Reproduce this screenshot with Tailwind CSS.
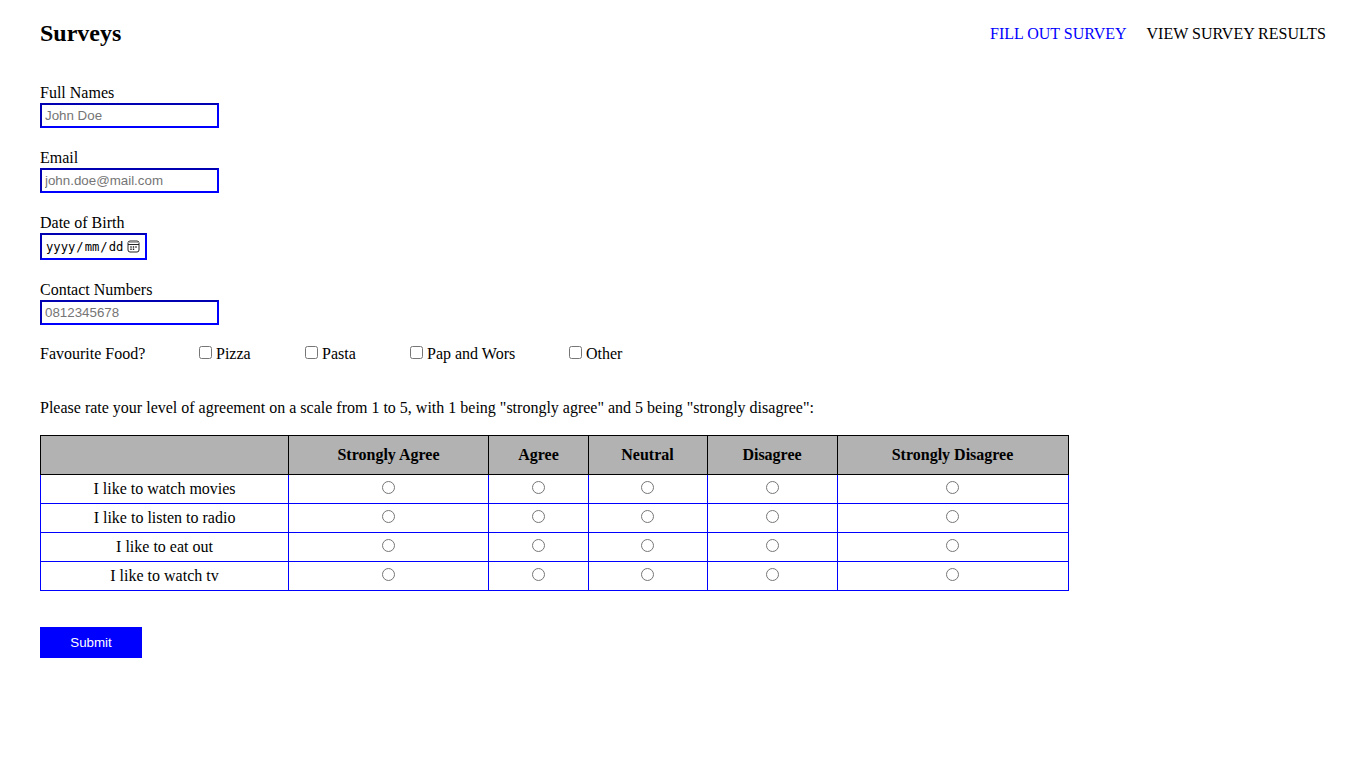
<!DOCTYPE html>
<html lang="en">
<head>
<meta charset="utf-8">
<title>Surveys</title>
<script src="https://cdn.jsdelivr.net/npm/@tailwindcss/browser@4"></script>
</head>
<body class="bg-white px-10 font-['Liberation_Serif',serif] text-[16px] leading-5 text-black">
<header class="flex h-[83px] items-start justify-between">
  <h2 class="mt-5 text-[24px] leading-[27px] font-bold">Surveys</h2>
  <nav class="mt-6 flex gap-5"><a class="text-[#0000ff]">FILL OUT SURVEY</a><a>VIEW SURVEY RESULTS</a></nav>
</header>
<form>
  <div class="flex flex-col items-start gap-5">
    <label class="block">Full Names
      <input type="text" placeholder="John Doe" class="block h-[25px] w-[179px] border-2 border-t-[#0000b2] border-l-[#0000b2] border-r-[#0000ff] border-b-[#0000ff] px-[3px] font-['Liberation_Sans',sans-serif] text-[13.333px] placeholder:text-[#757575]"></label>
    <label class="block">Email
      <input type="text" placeholder="john.doe@mail.com" class="block h-[25px] w-[179px] border-2 border-t-[#0000b2] border-l-[#0000b2] border-r-[#0000ff] border-b-[#0000ff] px-[3px] font-['Liberation_Sans',sans-serif] text-[13.333px] placeholder:text-[#757575]"></label>
    <div>Date of Birth
      <div class="flex h-[27px] w-[107px] items-center border-2 border-t-[#0000b2] border-l-[#0000b2] border-r-[#0000ff] border-b-[#0000ff] pl-[3px] font-['DejaVu_Sans_Mono',monospace] text-[12.2px] leading-none">
        <div class="flex pt-[2px]"><span class="w-[31px] pl-px">yyyy</span><span class="w-2 text-center">/</span><span class="w-4 text-center">mm</span><span class="w-2 text-center">/</span><span class="w-4 text-center">dd</span></div>
        <svg class="ml-[3px]" width="13" height="13" viewBox="0 0 13 13" fill="none" stroke="#222"><rect x="1" y="1" width="11" height="11" rx="2"/><path d="M1 2.5h11" stroke="#aaa"/><path d="M1 4.5h11"/><path stroke-width="1.4" d="M5.8 7h1.4M8.3 7h1.4M3.3 9.2h1.4M5.8 9.2h1.4M3.3 7h1.4"/></svg>
      </div>
    </div>
    <label class="block">Contact Numbers
      <input type="text" placeholder="0812345678" class="block h-[25px] w-[179px] border-2 border-t-[#0000b2] border-l-[#0000b2] border-r-[#0000ff] border-b-[#0000ff] px-[3px] font-['Liberation_Sans',sans-serif] text-[13.333px] placeholder:text-[#757575]"></label>
  </div>
  <div class="mt-[19px] flex h-5">
    <span class="w-[159px]">Favourite Food?</span>
    <label class="flex w-[106px]"><input type="checkbox" class="mt-[2px] mr-1 size-[13px]">Pizza</label>
    <label class="flex w-[105px]"><input type="checkbox" class="mt-[2px] mr-1 size-[13px]">Pasta</label>
    <label class="flex w-[159px]"><input type="checkbox" class="mt-[2px] mr-1 size-[13px]">Pap and Wors</label>
    <label class="flex"><input type="checkbox" class="mt-[2px] mr-1 size-[13px]">Other</label>
  </div>
  <p class="mt-[34px]">Please rate your level of agreement on a scale from 1 to 5, with 1 being "strongly agree" and 5 being "strongly disagree":</p>
  <table class="mt-[17px] w-[1029px] table-fixed border-collapse text-center">
    <colgroup><col class="w-[248px]"><col class="w-[200px]"><col class="w-[100px]"><col class="w-[119px]"><col class="w-[130px]"><col class="w-[231px]"></colgroup>
    <thead><tr class="h-[39px] bg-[#b2b2b2] *:border *:border-black"><th></th><th>Strongly Agree</th><th>Agree</th><th class="pr-px">Neutral</th><th class="pr-px">Disagree</th><th class="pr-px">Strongly Disagree</th></tr></thead>
    <tbody id="rows"></tbody>
  </table>
  <button type="button" class="mt-9 block h-[31px] w-[102px] bg-[#0000ff] font-['Liberation_Sans',sans-serif] text-[13.333px] text-white">Submit</button>
</form>
<script>
const padding = ['', '', 'pr-px', '', 'pr-px'];
const cells = n => padding.map(p => `<td class="${p}"><input type="radio" name="q${n}" class="mx-auto mb-[3px] block size-[13px]"></td>`).join('');
document.getElementById('rows').innerHTML = ['I like to watch movies','I like to listen to radio','I like to eat out','I like to watch tv']
  .map((t,i) => `<tr class="h-[29px] *:border *:border-[#0000ff]"><td>${t}</td>${cells(i)}</tr>`).join('');
</script>
</body>
</html>
